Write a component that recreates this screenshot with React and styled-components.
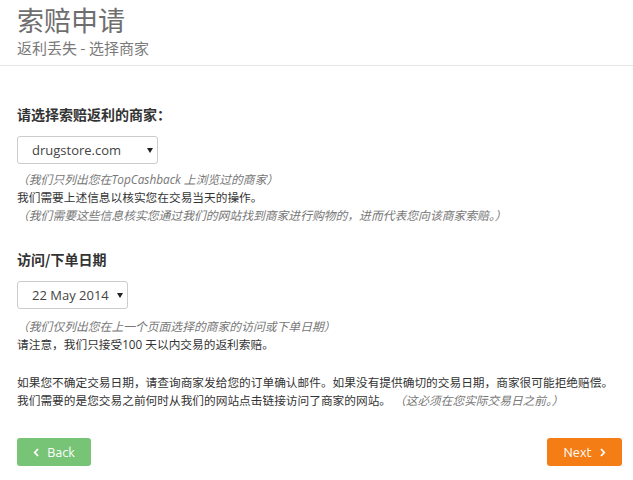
import React from "react";
import styled, { createGlobalStyle } from "styled-components";

const Global = createGlobalStyle`
  html, body { margin: 0; padding: 0; background: #fff; }
  body { font-family: "Open Sans", "Noto Sans CJK SC", sans-serif; color: #333; }
`;

const Page = styled.div`
  width: 633px;
  display: flex;
  flex-direction: column;
`;

const Header = styled.header`
  padding: 2px 17px 7px;
  border-bottom: 1px solid #e6e6e6;
`;

const Title = styled.h1`
  margin: 0;
  font-family: "Noto Sans CJK SC", sans-serif;
  font-weight: 400;
  font-size: 27px;
  line-height: 36px;
  color: #6e6e6e;
`;

const Subtitle = styled.h2`
  margin: 0;
  font-family: "Noto Sans CJK SC", sans-serif;
  font-weight: 400;
  font-size: 15px;
  line-height: 20px;
  color: #7a7a7a;
`;

const Body = styled.main`
  padding: 38px 11px 0 17px;
  display: flex;
  flex-direction: column;
`;

const Section = styled.section`
  display: flex;
  flex-direction: column;
  align-items: flex-start;
  margin-top: ${(p) => p.$gap || 0}px;
`;

const Label = styled.div`
  font-family: "Noto Sans CJK SC", sans-serif;
  font-weight: 700;
  font-size: 14px;
  line-height: 20px;
  color: #333;
  margin-bottom: 12px;
`;

const SelectBox = styled.div`
  box-sizing: border-box;
  width: ${(p) => p.$w}px;
  height: 28px;
  border: 1px solid #ccc;
  border-radius: 3px;
  display: flex;
  align-items: center;
  justify-content: space-between;
  padding: 0 4px 0 14px;
  font-family: "Open Sans", sans-serif;
  font-size: 13px;
  color: #444;
  background: #fff;
`;

const Caret = styled.span`
  width: 0;
  height: 0;
  border-left: 3px solid transparent;
  border-right: 3px solid transparent;
  border-top: 5px solid #222;
`;

const Notes = styled.div`
  margin-top: ${(p) => p.$top || 6}px;
  display: flex;
  flex-direction: column;
`;

const Note = styled.p`
  margin: 0;
  white-space: nowrap;
  font-family: "Open Sans", "Noto Sans CJK SC", sans-serif;
  font-size: ${(p) => (p.$italic ? 11.8 : 11.7)}px;
  line-height: 18px;
  color: ${(p) => (p.$italic ? "#777" : "#333")};
  font-style: ${(p) => (p.$italic ? "italic" : "normal")};
`;

const Em = styled.span`
  font-style: italic;
  color: #777;
`;

const Buttons = styled.div`
  margin-top: 29px;
  display: flex;
  justify-content: space-between;
`;

const Button = styled.button`
  box-sizing: border-box;
  height: 28px;
  width: ${(p) => p.$w}px;
  border: none;
  border-radius: 3px;
  background: ${(p) => p.$bg};
  color: #fff;
  font-family: "Ubuntu", "Open Sans", sans-serif;
  font-size: 13px;
  display: flex;
  align-items: center;
  justify-content: center;
  gap: 7px;
  padding: 0;
  cursor: pointer;
`;

const Chevron = ({ dir }) => (
  <svg width="7" height="9" viewBox="0 0 7 9" aria-hidden="true">
    <path
      d={dir === "left" ? "M5 1 L1.8 4.5 L5 8" : "M2 1 L5.2 4.5 L2 8"}
      fill="none"
      stroke="#fff"
      strokeWidth="1.8"
    />
  </svg>
);

export default function App() {
  return (
    <>
      <Global />
      <Page>
        <Header>
          <Title>索赔申请</Title>
          <Subtitle>返利丢失 - 选择商家</Subtitle>
        </Header>
        <Body>
          <Section>
            <Label>请选择索赔返利的商家：</Label>
            <SelectBox $w={141}>
              <span>drugstore.com</span>
              <Caret />
            </SelectBox>
            <Notes>
              <Note $italic>（我们只列出您在TopCashback 上浏览过的商家）</Note>
              <Note>我们需要上述信息以核实您在交易当天的操作。</Note>
              <Note $italic>（我们需要这些信息核实您通过我们的网站找到商家进行购物的，进而代表您向该商家索赔。）</Note>
            </Notes>
          </Section>
          <Section $gap={25}>
            <Label>访问/下单日期</Label>
            <SelectBox $w={111}>
              <span>22 May 2014</span>
              <Caret />
            </SelectBox>
            <Notes $top={8}>
              <Note $italic>（我们仅列出您在上一个页面选择的商家的访问或下单日期）</Note>
              <Note>请注意，我们只接受100 天以内交易的返利索赔。</Note>
            </Notes>
            <Notes $top={20}>
              <Note>如果您不确定交易日期，请查询商家发给您的订单确认邮件。如果没有提供确切的交易日期，商家很可能拒绝赔偿。</Note>
              <Note>我们需要的是您交易之前何时从我们的网站点击链接访问了商家的网站。 <Em>（这必须在您实际交易日之前。）</Em></Note>
            </Notes>
          </Section>
          <Buttons>
            <Button $w={74} $bg="#78c477">
              <Chevron dir="left" />
              Back
            </Button>
            <Button $w={75} $bg="#f47d16">
              Next
              <Chevron dir="right" />
            </Button>
          </Buttons>
        </Body>
      </Page>
    </>
  );
}
